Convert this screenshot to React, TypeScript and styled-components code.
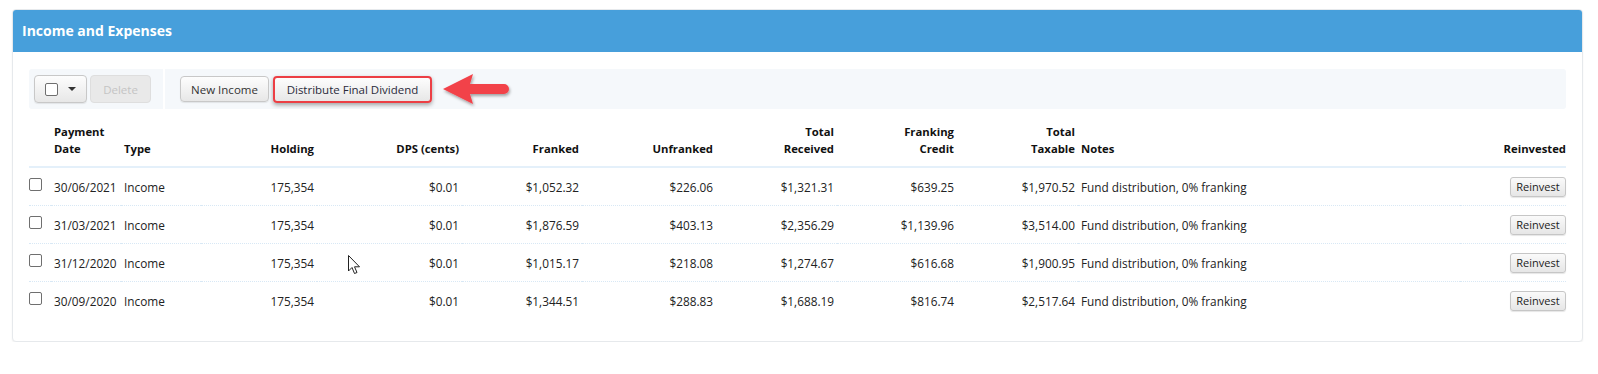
import React from 'react'
import styled, { createGlobalStyle, css } from 'styled-components'

type Row = {
  date: string
  holding: string
  dps: string
  franked: string
  unfranked: string
  received: string
  credit: string
  taxable: string
}

const rows: Row[] = [
  { date: '30/06/2021', holding: '175,354', dps: '$0.01', franked: '$1,052.32', unfranked: '$226.06', received: '$1,321.31', credit: '$639.25', taxable: '$1,970.52' },
  { date: '31/03/2021', holding: '175,354', dps: '$0.01', franked: '$1,876.59', unfranked: '$403.13', received: '$2,356.29', credit: '$1,139.96', taxable: '$3,514.00' },
  { date: '31/12/2020', holding: '175,354', dps: '$0.01', franked: '$1,015.17', unfranked: '$218.08', received: '$1,274.67', credit: '$616.68', taxable: '$1,900.95' },
  { date: '30/09/2020', holding: '175,354', dps: '$0.01', franked: '$1,344.51', unfranked: '$288.83', received: '$1,688.19', credit: '$816.74', taxable: '$2,517.64' },
]

const colWidths = [22, 70, 80, 116, 145, 120, 134, 121, 120, 121, undefined, 106]

const GlobalStyle = createGlobalStyle`
  body {
    margin: 0;
    background: #fff;
    font-family: 'Open Sans', 'Liberation Sans', sans-serif;
    color: #222;
  }
`

const App: React.FC = () => {
  return (
    <>
      <GlobalStyle />
      <StyledPanel>
        <StyledPanelHead>Income and Expenses</StyledPanelHead>
        <StyledPanelBody>
          <StyledToolbar>
            <StyledToolGroup className='left'>
              <StyledButton size='L' style={{ width: 53 }}>
                <Check />
                <StyledCaret />
              </StyledButton>
              <StyledButton size='L' disabled style={{ width: 61 }}>
                Delete
              </StyledButton>
            </StyledToolGroup>
            <StyledToolGroup>
              <StyledButton size='M' style={{ width: 89 }}>
                New Income
              </StyledButton>
              <StyledButton size='M' highlight style={{ width: 159 }}>
                Distribute Final Dividend
              </StyledButton>
              <Arrow />
            </StyledToolGroup>
          </StyledToolbar>

          <StyledTable>
            <colgroup>
              {colWidths.map((w, i) => (
                <col key={i} style={w ? { width: w } : undefined} />
              ))}
            </colgroup>
            <thead>
              <tr>
                <th />
                <th>Payment<br />Date</th>
                <th>Type</th>
                <th className='num'>Holding</th>
                <th className='num'>DPS (cents)</th>
                <th className='num'>Franked</th>
                <th className='num'>Unfranked</th>
                <th className='num'>Total<br />Received</th>
                <th className='num'>Franking<br />Credit</th>
                <th className='num'>Total<br />Taxable</th>
                <th>Notes</th>
                <th className='num last'>Reinvested</th>
              </tr>
            </thead>
            <tbody>
              {rows.map((r) => (
                <tr key={r.date}>
                  <td className='chk'><Check /></td>
                  <td>{r.date}</td>
                  <td>Income</td>
                  <td className='num'>{r.holding}</td>
                  <td className='num'>{r.dps}</td>
                  <td className='num'>{r.franked}</td>
                  <td className='num'>{r.unfranked}</td>
                  <td className='num'>{r.received}</td>
                  <td className='num'>{r.credit}</td>
                  <td className='num'>{r.taxable}</td>
                  <td>Fund distribution, 0% franking</td>
                  <td className='num last'>
                    <StyledSmallButton>Reinvest</StyledSmallButton>
                  </td>
                </tr>
              ))}
            </tbody>
          </StyledTable>
        </StyledPanelBody>
      </StyledPanel>
      <Cursor />
    </>
  )
}

export default App

const StyledPanel = styled.section`
  margin: 9px 15px 0 12px;
  background: #fff;
  border: 1px solid #e6e9ec;
  border-radius: 4px;
  box-shadow: 0 1px 2px rgba(0, 0, 0, 0.06);
  overflow: hidden;
`

const StyledPanelHead = styled.header`
  height: 43px;
  background: #479fdb;
  color: #fff;
  font-weight: 700;
  font-size: 14px;
  display: flex;
  align-items: center;
  padding: 0 10px;
  margin: -1px -1px 0;
`

const StyledPanelBody = styled.div`
  padding: 17px 16px 22px;
`

const StyledToolbar = styled.div`
  display: flex;
  height: 40px;
  background: #f5f8fb;
  border-radius: 3px;
`

const StyledToolGroup = styled.div`
  display: flex;
  align-items: center;
  gap: 4px;
  padding-left: 15px;
  flex: 1;
  &.left {
    flex: 0 0 136px;
    gap: 3px;
    padding-left: 5px;
    box-sizing: border-box;
    border-right: 2px solid #fff;
  }
`

const StyledButton = styled.button<{ size: 'L' | 'M'; highlight?: boolean }>`
  display: inline-flex;
  align-items: center;
  justify-content: center;
  gap: 10px;
  box-sizing: border-box;
  height: ${({ size }) => (size === 'L' ? 28 : 26)}px;
  padding: 0 8px;
  font-family: inherit;
  font-size: 11.5px;
  color: #333;
  background: linear-gradient(#fdfdfd, #e7e7e7);
  border: 1px solid #c8c8c8;
  border-radius: 4px;
  box-shadow: 0 1px 1px rgba(0, 0, 0, 0.08);
  white-space: nowrap;
  &:disabled {
    background: #e9e9e9;
    border-color: #dedede;
    color: #c4c4c4;
    box-shadow: none;
  }
  ${({ highlight }) =>
    highlight &&
    css`
      height: 27px;
      border: 2px solid #ec3f45;
      border-radius: 4px;
      box-shadow: 0 2px 4px rgba(0, 0, 0, 0.35);
      color: #2a2a3a;
    `}
`

const StyledCheck = styled.span`
  display: inline-block;
  width: 13px;
  height: 13px;
  box-sizing: border-box;
  border: 1px solid #6f6f6f;
  border-radius: 2px;
  background: #fff;
`

const Check: React.FC = () => <StyledCheck />

const StyledCaret = styled.span`
  width: 0;
  height: 0;
  border-left: 4px solid transparent;
  border-right: 4px solid transparent;
  border-top: 4px solid #333;
`

const Arrow: React.FC = () => (
  <svg width='72' height='36' viewBox='0 0 72 36' style={{ marginLeft: 5, overflow: 'visible' }}>
    <defs>
      <filter id='arrowShadow' x='-20%' y='-30%' width='140%' height='160%'>
        <feDropShadow dx='1' dy='2' stdDeviation='1.5' floodColor='#000' floodOpacity='0.35' />
      </filter>
    </defs>
    <path
      d='M2 18 L32 3 L29 13 L63 13 A5 5 0 0 1 63 23 L29 23 L32 33 Z'
      fill='#f2424a'
      filter='url(#arrowShadow)'
    />
  </svg>
)

const StyledTable = styled.table`
  width: 100%;
  table-layout: fixed;
  border-collapse: collapse;
  margin-top: 6px;
  font-size: 11.8px;

  th,
  td {
    padding: 0 3px;
    text-align: left;
    white-space: nowrap;
  }
  th {
    font-weight: 700;
    font-size: 11.3px;
    color: #111;
    line-height: 17px;
    vertical-align: bottom;
    padding-top: 8px;
    padding-bottom: 9px;
    border-bottom: 2px solid #e4f0fa;
  }
  td {
    height: 37px;
    vertical-align: middle;
  }
  tbody tr + tr td {
    border-top: 1px dotted #d8e8f5;
  }
  .num {
    text-align: right;
  }
  .last {
    padding-right: 0;
  }
  td.chk {
    padding: 0;
    vertical-align: middle;
  }
  td.chk > span {
    position: relative;
    top: -1px;
  }
`

const StyledSmallButton = styled.button`
  box-sizing: border-box;
  width: 56px;
  height: 20px;
  padding: 0;
  font-family: inherit;
  font-size: 11px;
  color: #222;
  background: linear-gradient(#fafafa, #e6e6e6);
  border: 1px solid #c6c6c6;
  border-radius: 3px;
  box-shadow: 0 1px 1px rgba(0, 0, 0, 0.1);
`

const StyledCursor = styled.svg`
  position: absolute;
  left: 348px;
  top: 255px;
`

const Cursor: React.FC = () => (
  <StyledCursor width='13' height='20' viewBox='0 0 13 20'>
    <path
      d='M0.5 0.5 L0.5 16 L4 12.5 L6.5 18.5 L9 17.5 L6.5 11.8 L11.5 11.8 Z'
      fill='#fff'
      stroke='#222'
      strokeWidth='1'
      strokeLinejoin='round'
    />
  </StyledCursor>
)
